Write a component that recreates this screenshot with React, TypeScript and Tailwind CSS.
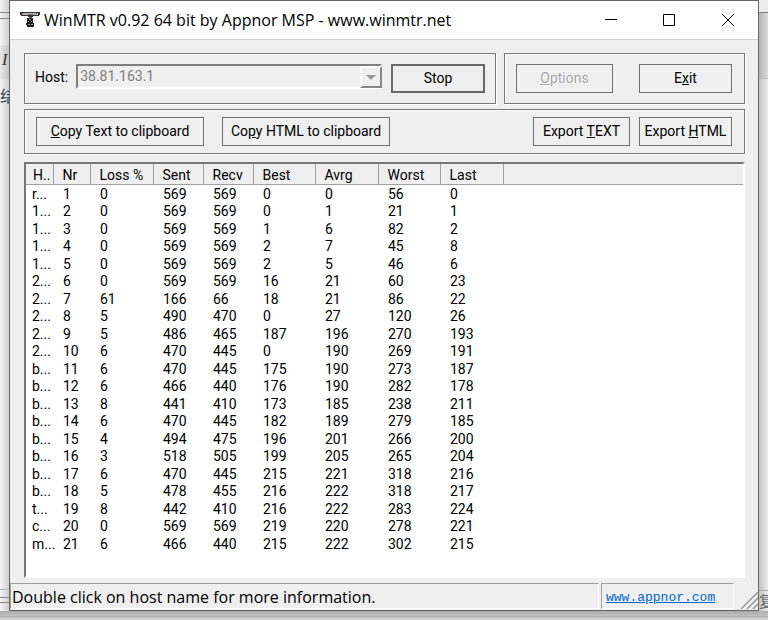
import { ReactNode } from "react";

const rows = [
	["r...", 1, 0, 569, 569, 0, 0, 56, 0],
	["1...", 2, 0, 569, 569, 0, 1, 21, 1],
	["1...", 3, 0, 569, 569, 1, 6, 82, 2],
	["1...", 4, 0, 569, 569, 2, 7, 45, 8],
	["1...", 5, 0, 569, 569, 2, 5, 46, 6],
	["2...", 6, 0, 569, 569, 16, 21, 60, 23],
	["2...", 7, 61, 166, 66, 18, 21, 86, 22],
	["2...", 8, 5, 490, 470, 0, 27, 120, 26],
	["2...", 9, 5, 486, 465, 187, 196, 270, 193],
	["2...", 10, 6, 470, 445, 0, 190, 269, 191],
	["b...", 11, 6, 470, 445, 175, 190, 273, 187],
	["b...", 12, 6, 466, 440, 176, 190, 282, 178],
	["b...", 13, 8, 441, 410, 173, 185, 238, 211],
	["b...", 14, 6, 470, 445, 182, 189, 279, 185],
	["b...", 15, 4, 494, 475, 196, 201, 266, 200],
	["b...", 16, 3, 518, 505, 199, 205, 265, 204],
	["b...", 17, 6, 470, 445, 215, 221, 318, 216],
	["b...", 18, 5, 478, 455, 216, 222, 318, 217],
	["t...", 19, 8, 442, 410, 216, 222, 283, 224],
	["c...", 20, 0, 569, 569, 219, 220, 278, 221],
	["m...", 21, 6, 466, 440, 215, 222, 302, 215],
];

const columns = [
	{ label: "H..", width: "w-[27px]" },
	{ label: "Nr", width: "w-[37px]" },
	{ label: "Loss %", width: "w-[63px]" },
	{ label: "Sent", width: "w-[50px]" },
	{ label: "Recv", width: "w-[50px]" },
	{ label: "Best", width: "w-[62px]" },
	{ label: "Avrg", width: "w-[63px]" },
	{ label: "Worst", width: "w-[62px]" },
	{ label: "Last", width: "w-[63px]" },
];

interface PushButtonProps {
	children: ReactNode;
	width: string;
	isDefault?: boolean;
	disabled?: boolean;
}

function PushButton({ children, width, isDefault, disabled }: PushButtonProps) {
	return (
		<button
			disabled={disabled}
			className={`h-[29px] shrink-0 pb-[2px] whitespace-nowrap ${width} ${
				isDefault ? "border-2 border-[#696969]" : "border border-[#707070]"
			} ${
				disabled ? "text-[#a5a5a5] [text-shadow:1px_1px_0_#fff]" : "text-black"
			}`}>
			{children}
		</button>
	);
}

function Group({ children, className }: { children: ReactNode; className: string }) {
	return (
		<div
			className={`flex border border-[#777] shadow-[inset_1px_1px_0_#fff,1px_1px_0_#fff] ${className}`}>
			{children}
		</div>
	);
}

// Dish on a pedestal, the program icon
function AppIcon() {
	return (
		<svg width="20" height="16" viewBox="0 0 20 16" aria-hidden="true">
			<path d="M0 0h20v3h-1v1h-6v1h-5V4H1V3H0z" fill="#333" />
			<path d="M2 1h16v2H2z" fill="#b5b5b5" />
			<path d="M2 1h1v1H2zM16 1h1v1h-1z" fill="#c33" />
			<path d="M8 2h6v1H8z" fill="#777" />
			<path d="M9 5h3v2H9z" fill="#666" />
			<path d="M7 6h6v5h1v4H7v-2H6v-2h1z" fill="#1c1c1c" />
			<path d="M9 7h2v1H9zM8 9h1v1H8zM11 9h1v1h-1zM8 12h2v1H8zM11 12h2v1h-2z" fill="#999" />
		</svg>
	);
}

function TitleBar() {
	return (
		<header className="flex h-[39px] items-center border-b border-[#d2d2d2] bg-white pl-[10px]">
			<AppIcon />
			<h1 className="ml-1 flex-1 whitespace-nowrap font-['Open_Sans',sans-serif] text-[16px] leading-5">
				WinMTR v0.92 64 bit by Appnor MSP - www.winmtr.net
			</h1>
			<button aria-label="Minimize" className="flex h-full w-[58px] items-center justify-center">
				<svg width="12" height="12" stroke="#000" fill="none">
					<path d="M0 5.5h12" />
				</svg>
			</button>
			<button aria-label="Maximize" className="flex h-full w-[58px] items-center justify-center">
				<svg width="12" height="12" stroke="#000" fill="none">
					<path d="M.5.5h11v11H.5z" />
				</svg>
			</button>
			<button aria-label="Close" className="flex h-full w-[60px] items-center justify-center">
				<svg width="12" height="12" stroke="#000" fill="none">
					<path d="M0 0l12 12M12 0L0 12" />
				</svg>
			</button>
		</header>
	);
}

function Toolbar() {
	return (
		<div className="flex flex-col gap-[5px] pt-[13px] pr-[13px] pl-[14px]">
			<div className="flex gap-2">
				<Group className="h-[51px] flex-1 pt-[10px] pr-[10px] pl-[10px]">
					<label htmlFor="host" className="mr-[8px] leading-[27px]">
						Host:
					</label>
					<div className="relative mr-[9px] h-[25px] flex-1">
						<select
							id="host"
							disabled
							className="block h-full w-full appearance-none border-2 border-t-[#808080] border-r-white border-b-white border-l-[#808080] bg-[#efefef] pb-[2px] pl-[2px] text-[#808080]">
							<option>38.81.163.1</option>
						</select>
						<span className="pointer-events-none absolute top-[2px] right-0 bottom-px flex w-[22px] items-center justify-center border-2 border-t-white border-r-[#888] border-b-[#888] border-l-white">
							<svg width="10" height="5" fill="#999">
								<path d="M0 0h10L5 5z" />
							</svg>
						</span>
					</div>
					<PushButton width="w-[94px]" isDefault>
						Stop
					</PushButton>
				</Group>
				<Group className="h-[51px] w-[241px] items-center justify-between pr-[12px] pl-[11px]">
					<PushButton width="w-[97px]" disabled>
						<u>O</u>ptions
					</PushButton>
					<PushButton width="w-[93px]">
						E<u>x</u>it
					</PushButton>
				</Group>
			</div>
			<Group className="h-[45px] items-center pr-[12px] pl-[11px]">
				<PushButton width="w-[168px]">
					<u>C</u>opy Text to clipboard
				</PushButton>
				<div className="w-[18px]" />
				<PushButton width="w-[168px]">
					Co<u>p</u>y HTML to clipboard
				</PushButton>
				<div className="flex-1" />
				<PushButton width="w-[97px]">
					Export <u>T</u>EXT
				</PushButton>
				<div className="w-[9px]" />
				<PushButton width="w-[93px]">
					Export <u>H</u>TML
				</PushButton>
			</Group>
		</div>
	);
}

function HostTable() {
	return (
		<div className="mt-2 mr-[13px] ml-[14px] flex-1 border-2 border-t-[#777] border-r-white border-b-white border-l-[#777] bg-white">
			<table className="w-full table-fixed border-collapse text-left">
				<thead>
					<tr className="h-[20px] bg-[#efefef] leading-[18px]">
						{columns.map((column, i) => (
							<th
								key={column.label}
								className={`${column.width} overflow-hidden border-r border-b border-[#a0a0a0] p-0 pt-[2px] font-normal whitespace-nowrap ${
									i === 0 ? "pl-[7px]" : "pl-[9px]"
								}`}>
								{column.label}
							</th>
						))}
						<th className="border-b border-[#a0a0a0] p-0" />
					</tr>
				</thead>
				<tbody>
					{rows.map((row) => (
						<tr key={row[1]} className="odd:leading-[18px] even:leading-[17px]">
							{row.map((value, i) => (
								<td
									key={i}
									className={`p-0 whitespace-nowrap ${i === 0 ? "pl-[6px]" : "pl-[10px]"}`}>
									{value}
								</td>
							))}
							<td className="p-0" />
						</tr>
					))}
				</tbody>
			</table>
		</div>
	);
}

function StatusBar() {
	return (
		<footer className="mt-[5px] flex h-[27px] shrink-0 pb-px">
			<div className="flex flex-1 items-center border border-t-[#a0a0a0] border-r-white border-b-white border-l-[#a0a0a0] pt-[2px] pl-px font-['Open_Sans',sans-serif] text-[16px]">
				Double click on host name for more information.
			</div>
			<div className="ml-[2px] flex w-[133px] items-center border border-t-[#a0a0a0] border-r-white border-b-white border-l-[#a0a0a0] pt-1 pl-1">
				<a
					href="http://www.appnor.com"
					className="font-['Liberation_Mono',monospace] text-[13px] text-[#0066cc] underline">
					www.appnor.com
				</a>
			</div>
			<div className="flex w-[24px] items-end justify-end">
				<svg width="17" height="17" stroke="#999" strokeWidth="1.5" aria-hidden="true">
					<path d="M0 17L17 0M6 17L17 6M12 17l5-5" />
				</svg>
			</div>
		</footer>
	);
}

export default function App() {
	return (
		<div className="flex min-h-screen flex-col bg-[#dedede] font-[Roboto,sans-serif] text-[14px] leading-5 text-black">
			<div className="flex flex-1">
				{/* Document behind the window, left edge */}
				<div className="flex w-[9px] shrink-0 flex-col overflow-hidden bg-linear-to-r from-[#f6f6f6] to-[#d0d0d0]">
					<div className="h-[45px] pt-[12px]">
						<div className="h-[7px] border-y border-[#888]" />
					</div>
					<div className="flex h-[34px] items-center bg-linear-to-r from-[#e8e8e8] to-[#c4c4c4] pb-1 pl-[2px] font-['Liberation_Serif',serif] text-[16px] text-[#333] italic">
						I
					</div>
					<div className="flex h-[32px] items-center font-['Noto_Sans_CJK_SC',sans-serif] text-[16px] text-[#345]">
						结
					</div>
					<div className="mt-auto h-[22px] border-t border-[#bbb] pt-[7px]">
						<div className="h-[6px] border-y border-[#888]" />
					</div>
				</div>
				<div className="flex min-w-0 flex-1 flex-col border border-[#666] bg-[#efefef]">
					<TitleBar />
					<Toolbar />
					<HostTable />
					<StatusBar />
				</div>
				{/* Document behind the window, right edge */}
				<div className="flex w-[9px] shrink-0 flex-col overflow-hidden bg-linear-to-r from-[#c4c4c4] to-[#ececec]">
					<div className="h-[13px] border-b border-[#777] bg-[#ececec]" />
					<div className="h-[66px] border-b border-[#bbb] bg-linear-to-r from-[#b4b4b4] to-[#dcdcdc]" />
					<div className="mt-auto border-t border-[#aaa] font-['Noto_Sans_CJK_SC',sans-serif] text-[15px] text-[#666]">
						复
					</div>
				</div>
			</div>
			<div className="h-[9px] bg-linear-to-b from-[#aaa] to-[#d4d4d4]">
				<div className="h-[6px] border-b border-[#aaa]" />
			</div>
		</div>
	);
}
